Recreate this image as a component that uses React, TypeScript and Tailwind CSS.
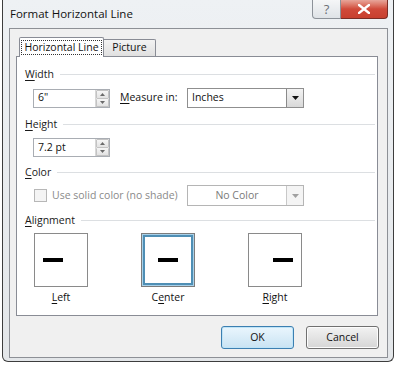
import React from 'react';

const font = { fontFamily: '"Segoe UI", "Open Sans", "Noto Sans", sans-serif' };

const SectionHeader: React.FC<{ label: string; u: number }> = ({ label, u }) => (
  <div className="flex items-center h-[14px] pl-[8px] pr-[2px] gap-[6px]">
    <span className="text-[10.5px] leading-[14px] text-[#1a1a1a] whitespace-nowrap">
      {label.slice(0, u)}
      <span className="underline underline-offset-[2px]">{label[u]}</span>
      {label.slice(u + 1)}
    </span>
    <div className="flex-1 h-px bg-[#dcdfe2]" />
  </div>
);

const Spinner: React.FC = () => (
  <div className="flex flex-col w-[14px] h-full border-l border-[#d7d7d7]">
    <div className="flex-1 flex items-center justify-center bg-gradient-to-b from-[#f6f6f6] to-[#e2e2e2] border border-[#c3c3c3] rounded-[1px]">
      <svg width="5" height="3" viewBox="0 0 5 3"><path d="M2.5 0L5 3H0z" fill="#6a6a6a" /></svg>
    </div>
    <div className="flex-1 flex items-center justify-center bg-gradient-to-b from-[#f6f6f6] to-[#e2e2e2] border border-t-0 border-[#c3c3c3] rounded-[1px]">
      <svg width="5" height="3" viewBox="0 0 5 3"><path d="M0 0H5L2.5 3z" fill="#6a6a6a" /></svg>
    </div>
  </div>
);

const SpinBox: React.FC<{ value: string }> = ({ value }) => (
  <div className="flex w-[77px] h-[19px] border border-[#a9adb3] bg-white">
    <div className="flex-1 flex items-center pl-[4px] text-[10.5px] text-[#111]">{value}</div>
    <Spinner />
  </div>
);

const Combo: React.FC<{ value: string; disabled?: boolean }> = ({ value, disabled }) => (
  <div
    className={`flex w-[117px] h-full border bg-white ${disabled ? 'border-[#b5b5b5]' : 'border-[#8f8f8f]'}`}
  >
    <div
      className={`flex-1 flex items-center text-[10.5px] ${
        disabled ? 'justify-center text-[#7a7a7a]' : 'pl-[4px] text-[#111]'
      }`}
    >
      {value}
    </div>
    <div
      className={`w-[17px] flex items-center justify-center border-l ${
        disabled
          ? 'border-[#c8c8c8] bg-[#f4f4f4]'
          : 'border-[#8a8a8a] bg-gradient-to-b from-[#f3f3f3] to-[#d9d9d9]'
      }`}
    >
      <svg width="7" height="4" viewBox="0 0 7 4">
        <path d="M0 0H7L3.5 4z" fill={disabled ? '#a0a0a0' : '#111'} />
      </svg>
    </div>
  </div>
);

const AlignBox: React.FC<{ pos: 'left' | 'center' | 'right'; selected?: boolean }> = ({ pos, selected }) => (
  <div
    className={`w-[54px] h-[54px] flex items-center bg-white ${
      selected
        ? 'border border-[#7c7c7c] shadow-[inset_0_0_0_1px_#a8d0e8,inset_0_0_0_3px_#4f8fb5]'
        : 'border border-[#8a8a8a]'
    } ${pos === 'left' ? 'justify-start pl-[8px]' : pos === 'center' ? 'justify-center' : 'justify-end pr-[8px]'}`}
  >
    <div className="w-[20px] h-[4px] bg-black" />
  </div>
);

export default function App() {
  return (
    <div className="w-[394px] h-[366px] bg-white overflow-hidden pl-[2px]" style={font}>
      <div className="w-[392px] h-[362px] border-x border-b border-[#3d3d3d] rounded-b-[6px] bg-gradient-to-b from-[#eef1f4] to-[#e3e6e9] flex flex-col">
        {/* title bar */}
        <div className="h-[28px] flex items-start">
          <span className="pl-[7px] pt-[6px] text-[11.5px] leading-[16px] text-[#111] whitespace-nowrap">
            Format Horizontal Line
          </span>
          <div className="ml-auto mr-[5px] flex">
            <div className="w-[29px] h-[19px] border border-[#8d9299] border-t-0 rounded-bl-[4px] bg-gradient-to-b from-[#f5f6f7] to-[#dfe3e7] flex items-center justify-center text-[13px] leading-none text-[#6b6f75]">
              ?
            </div>
            <div className="w-[47px] h-[19px] border border-[#7a2d25] border-t-0 border-l-0 rounded-br-[4px] bg-gradient-to-b from-[#e7a59a] via-[#d04a3a] to-[#c8402f] flex items-center justify-center">
              <svg width="12" height="10" viewBox="0 0 12 10">
                <path d="M1 1L11 9M11 1L1 9" stroke="#fff" strokeWidth="2.4" strokeLinecap="square" />
              </svg>
            </div>
          </div>
        </div>

        {/* client area */}
        <div className="ml-[6px] w-[379px] h-[330px] border border-[#8d9096] bg-[#f0f0f0] flex flex-col">
          {/* tabs */}
          <div className="mt-[8px] ml-[9px] h-[19px] flex items-end">
            <div className="relative z-10 self-start w-[85px] h-[20px] bg-white border border-b-0 border-[#898c95] rounded-t-[2px] flex items-center justify-center">
              <span className="px-[2px] h-[15px] flex items-center border border-dotted border-[#333] text-[10.5px] text-[#111] whitespace-nowrap">
                Horizontal Line
              </span>
            </div>
            <div className="w-[52px] h-[17px] border border-l-0 border-b-0 border-[#898c95] rounded-tr-[2px] bg-gradient-to-b from-[#f3f3f3] to-[#e0e0e0] flex items-center justify-center text-[10.5px] text-[#111]">
              Picture
            </div>
          </div>

          {/* panel */}
          <div className="ml-[6px] w-[362px] h-[260px] border border-[#898c95] bg-white flex flex-col pt-[10px]">
            <SectionHeader label="Width" u={0} />
            <div className="mt-[7px] h-[20px] flex items-center pl-[16px]">
              <SpinBox value={'6"'} />
              <span className="ml-[10px] text-[10.5px] text-[#111]">
                <span className="underline underline-offset-[2px]">M</span>easure in:
              </span>
              <div className="ml-auto mr-[73px] h-[20px]">
                <Combo value="Inches" />
              </div>
            </div>

            <div className="mt-[9px]">
              <SectionHeader label="Height" u={0} />
            </div>
            <div className="mt-[7px] h-[19px] flex pl-[16px]">
              <SpinBox value="7.2 pt" />
            </div>

            <div className="mt-[8px]">
              <SectionHeader label="Color" u={0} />
            </div>
            <div className="mt-[6px] h-[21px] flex items-center pl-[17px]">
              <div className="w-[13px] h-[13px] border border-[#b7b7b7] bg-[#f4f4f4]" />
              <span className="ml-[5px] text-[10.5px] text-[#8a8a8a] whitespace-nowrap">Use solid color (no shade)</span>
              <div className="ml-auto mr-[73px] h-[21px]">
                <Combo value="No Color" disabled />
              </div>
            </div>

            <div className="mt-[7px]">
              <SectionHeader label="Alignment" u={0} />
            </div>
            <div className="mt-[6px] flex pl-[17px] gap-[53px]">
              {[
                { pos: 'left' as const, label: 'Left', u: 0 },
                { pos: 'center' as const, label: 'Center', u: 1 },
                { pos: 'right' as const, label: 'Right', u: 0 },
              ].map((a) => (
                <div key={a.pos} className="flex flex-col items-center w-[54px]">
                  <AlignBox pos={a.pos} selected={a.pos === 'center'} />
                  <span className="mt-[3px] text-[10.5px] leading-[14px] text-[#111]">
                    {a.label.slice(0, a.u)}
                    <span className="underline underline-offset-[2px]">{a.label[a.u]}</span>
                    {a.label.slice(a.u + 1)}
                  </span>
                </div>
              ))}
            </div>
          </div>

          {/* buttons */}
          <div className="mt-[10px] flex justify-end gap-[12px] mr-[8px]">
            <button className="w-[73px] h-[23px] rounded-[3px] border border-[#3c7fb1] bg-gradient-to-b from-[#eaf6fd] to-[#c9e3f3] shadow-[inset_0_0_0_1px_#bfe4f7] text-[10.5px] text-[#111]">
              OK
            </button>
            <button className="w-[73px] h-[23px] rounded-[3px] border border-[#707070] bg-gradient-to-b from-[#f2f2f2] to-[#d6d6d6] shadow-[inset_0_0_0_1px_#fcfcfc] text-[10.5px] text-[#111]">
              Cancel
            </button>
          </div>
        </div>
      </div>
    </div>
  );
}
